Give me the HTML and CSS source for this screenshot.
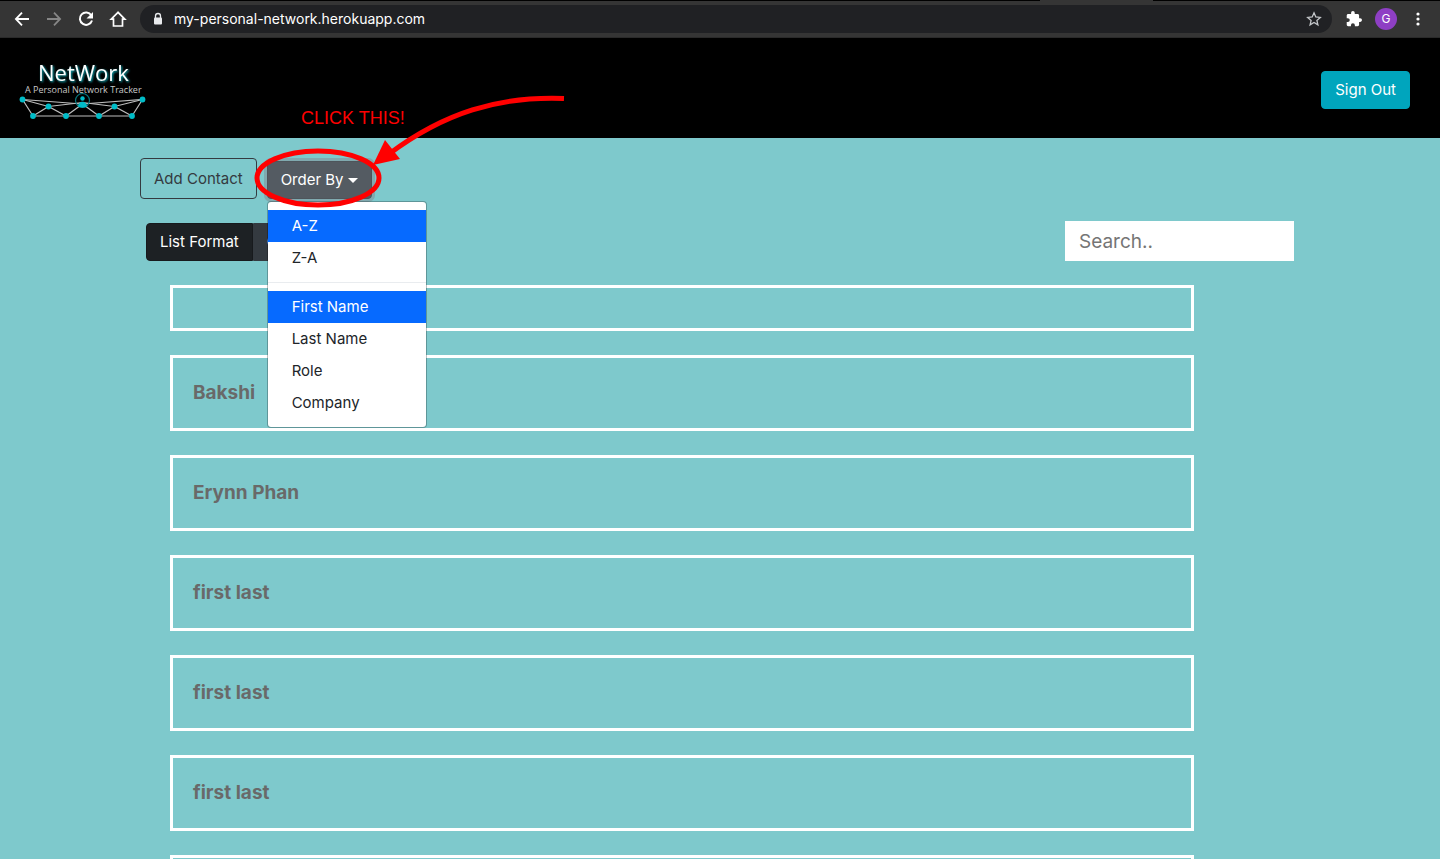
FILE: index.html
```html
<!DOCTYPE html>
<html lang="en">
<head>
<meta charset="utf-8">
<title>NetWork</title>
<link rel="stylesheet" href="styles.css">
</head>
<body>
<div class="browser">
  <div class="tab-strip"><span class="tab-edge"></span></div>
  <div class="toolbar">
    <button class="tool" type="button" aria-label="Back"><svg width="24" height="24" viewBox="0 0 24 24"><path d="M19 12H6.500M12 5.700 5.900 12l6.100 6.300" fill="none" stroke="#fff" stroke-width="1.800"/></svg></button>
    <button class="tool" type="button" aria-label="Forward"><svg width="24" height="24" viewBox="0 0 24 24"><path d="M5 12h12.500M12 5.700 18.100 12 12 18.300" fill="none" stroke="#868686" stroke-width="1.800"/></svg></button>
    <button class="tool" type="button" aria-label="Reload"><svg width="24" height="24" viewBox="0 0 24 24"><path d="M17.300 8.300A6.200 6.200 0 1 0 18 13.500" fill="none" stroke="#fff" stroke-width="2"/><path d="M19 5v6.500h-6.500z" fill="#fff"/></svg></button>
    <button class="tool" type="button" aria-label="Home"><svg width="24" height="24" viewBox="0 0 24 24"><path d="M12 5.300 5.200 12.200h2.300v6.800h9v-6.800h2.300z" fill="none" stroke="#fff" stroke-width="1.700"/></svg></button>
    <div class="address">
      <svg width="12" height="14" viewBox="0 0 12 14"><path d="M3.500 6V4a2.500 2.500 0 0 1 5 0v2" fill="none" stroke="#e8eaed" stroke-width="1.300"/><rect x="2" y="5.500" width="8" height="7" rx="1" fill="#e8eaed"/></svg>
      <input class="url" type="text" aria-label="Address" value="my-personal-network.herokuapp.com">
      <svg width="16" height="16" viewBox="0 0 16 16"><path d="M8 1.800 9.800 6l4.500.4-3.400 3 1 4.400L8 11.500l-3.900 2.300 1-4.400-3.400-3L6.200 6z" fill="none" stroke="#c4c7ca" stroke-width="1.300"/></svg>
    </div>
    <button class="tool" type="button" aria-label="Extensions"><svg width="16" height="16" viewBox="1 1 22 22"><path d="M20.500 11H19V7c0-1.100-.9-2-2-2h-4V3.500a2.500 2.500 0 0 0-5 0V5H4c-1.100 0-2 .9-2 2v3.800h1.500a2.700 2.700 0 0 1 0 5.400H2V20c0 1.100.9 2 2 2h3.800v-1.500a2.700 2.700 0 0 1 5.400 0V22H17c1.100 0 2-.9 2-2v-4h1.500a2.500 2.500 0 0 0 0-5z" fill="#fff"/></svg></button>
    <button class="avatar" type="button">G</button>
    <button class="tool" type="button" aria-label="Menu"><svg width="16" height="16" viewBox="0 0 16 16" fill="#fff"><circle cx="8" cy="3" r="1.600"/><circle cx="8" cy="8" r="1.600"/><circle cx="8" cy="13" r="1.600"/></svg></button>
  </div>
</div>

<header class="header">
  <a class="logo" href="#" aria-label="NetWork home">
    <svg width="130" height="60" viewBox="0 0 130 60">
      <text class="logo-name" x="18" y="19">NetWork</text>
      <text class="logo-tag" x="5" y="31">A Personal Network Tracker</text>
      <g fill="none" stroke="#bdbdbd" stroke-width="1.200">
        <path d="M2.500 37.500 62.500 42l60-4.500L112 54H13z"/>
        <path d="M2.500 37.500 28.500 44.500 62.500 40.500 94.500 44.500l28-7"/>
        <path d="M13 54l15.500-9.500L46 54l16.500-12L79 54l15.500-9.500L112 54"/>
      </g>
      <circle cx="62.500" cy="38.500" r="7" fill="none" stroke="#08777e" stroke-width="1.200"/>
      <g fill="#00bcc8">
        <circle cx="62.500" cy="36.500" r="2.200"/>
        <path d="M58 44.500c0-6.500 9-6.500 9 0-2 1.500-7 1.500-9 0z"/>
        <circle cx="2.500" cy="37.500" r="2.900"/><circle cx="28.500" cy="44.500" r="2.900"/>
        <circle cx="94.500" cy="44.500" r="2.900"/><circle cx="122.500" cy="37.500" r="2.900"/>
        <circle cx="13" cy="54" r="2.900"/><circle cx="46" cy="54" r="2.900"/>
        <circle cx="79" cy="54" r="2.900"/><circle cx="112" cy="54" r="2.900"/>
      </g>
    </svg>
  </a>
  <button class="btn btn-info" type="button">Sign Out</button>
</header>

<main class="main">
  <div class="actions">
    <button class="btn btn-outline" type="button">Add Contact</button>
    <div class="dropdown">
      <button class="btn btn-order" type="button" aria-expanded="true">Order By<span class="caret"></span></button>
      <div class="menu">
        <button class="item active" type="button">A-Z</button>
        <button class="item" type="button">Z-A</button>
        <hr class="divider">
        <button class="item active" type="button">First Name</button>
        <button class="item" type="button">Last Name</button>
        <button class="item" type="button">Role</button>
        <button class="item" type="button">Company</button>
      </div>
      <svg class="callout" width="320" height="115" viewBox="0 0 320 115">
        <text x="50" y="29">CLICK THIS!</text>
        <ellipse cx="67" cy="83" rx="61" ry="27" fill="none" stroke="#f00" stroke-width="5"/>
        <path d="M313 3.500C247 1 193 18 138 59" fill="none" stroke="#f00" stroke-width="5"/>
        <path d="M122 70 134 45 149 64z" fill="#f00"/>
      </svg>
    </div>
  </div>

  <div class="filters">
    <div class="group">
      <button class="btn btn-dark pressed" type="button">List Format</button>
      <button class="btn btn-dark" type="button">Card Format</button>
    </div>
    <input class="search" type="text" placeholder="Search.." aria-label="Search">
  </div>

  <div class="contacts">
    <article class="contact"></article>
    <article class="contact"><h2>Bakshi</h2></article>
    <article class="contact"><h2>Erynn Phan</h2></article>
    <article class="contact"><h2>first last</h2></article>
    <article class="contact"><h2>first last</h2></article>
    <article class="contact"><h2>first last</h2></article>
    <article class="contact"></article>
  </div>
</main>
</body>
</html>
```

FILE: styles.css
```css
* { box-sizing: border-box; }
html { scrollbar-width: none; background: #7ec9cc; }
body {
  margin: 0;
  font-family: Inter, "Liberation Sans", sans-serif;
  font-size: 15px;
  line-height: 24px;
  color: #212529;
}
button, input { font: inherit; margin: 0; }
button { cursor: pointer; }

.browser { background: #353535; border-bottom: 1px solid #2a2a2a; }
.tab-strip { display: flex; justify-content: flex-end; height: 1px; padding-right: 287px; background: #000; }
.tab-edge { width: 113px; background: #353535; }
.toolbar { display: flex; align-items: center; gap: 8px; height: 36px; padding: 0 10px; }
.tool { display: flex; align-items: center; justify-content: center; width: 24px; height: 24px; padding: 0; border: 0; background: none; flex: none; }
.address { display: flex; align-items: center; flex: 1; height: 28px; margin: 0 2px; padding: 0 10px 0 12px; border-radius: 14px; background: #202124; }
.url { flex: 1; min-width: 0; padding: 0 0 0 10px; border: 0; outline: 0; background: none; color: #fff; font-size: 14px; }
.avatar { width: 22px; height: 22px; margin: 0 1px; padding: 0; border: 0; border-radius: 50%; background: #8e3fc4; color: #fff; font-size: 12px; line-height: 22px; }

.header { display: flex; align-items: center; justify-content: space-between; height: 100px; padding: 4px 30px 0 20px; background: #000; }
.logo { display: flex; padding-top: 4px; }
.logo svg { overflow: visible; }
.logo-name { font-family: "Open Sans", sans-serif; font-size: 22px; fill: #fff; filter: drop-shadow(1px 1px 1px #0fb3c0); }
.logo-tag { font-family: "Open Sans", sans-serif; font-size: 9px; fill: #c8c8c8; }

.btn { padding: 6px 13px; border: 1px solid transparent; border-radius: 4px; }
.btn-info { background: #00a5bd; border-color: #00a5bd; color: #fff; }
.btn-outline { padding-top: 8px; padding-bottom: 7px; background: none; border-color: #343a40; color: #343a40; }
.btn-order { display: flex; align-items: center; gap: 4px; background: #545b62; border-color: #4e555b; color: #fff; box-shadow: 0 0 0 3px rgba(130, 138, 145, .5); }
.caret { border: 5px solid transparent; border-top-color: #fff; border-bottom: 0; }
.btn-dark { background: #343a40; border-color: #343a40; color: #fff; }
.pressed { background: #1d2124; border-color: #171a1d; }

.main { padding: 20px 140px 0; }
.actions { display: flex; align-items: flex-end; gap: 10px; }
.dropdown { position: relative; }
.menu { position: absolute; z-index: 2; top: 100%; left: 0; width: 160px; margin-top: 2px; padding: 8px 0; border: 1px solid rgba(0, 0, 0, .25); border-radius: 4px; background: #fff; background-clip: padding-box; }
.item { display: block; width: 100%; padding: 4px 24px; border: 0; background: none; color: #212529; text-align: left; }
.item.active { background: #066aff; color: #fff; }
.divider { height: 1px; margin: 8px 0; border: 0; background: #e9ecef; }
.callout { position: absolute; z-index: 3; top: -66px; left: -16px; pointer-events: none; }
.callout text { font-family: "Liberation Sans", sans-serif; font-size: 18px; fill: #f00; }

.filters { display: flex; align-items: center; justify-content: space-between; margin-top: 22px; padding: 0 6px; }
.group { display: flex; padding-top: 2px; }
.group .btn:first-child { border-radius: 4px 0 0 4px; }
.group .btn:last-child { border-radius: 0 4px 4px 0; }
.search { width: 229px; height: 40px; padding: 0 14px; border: 0; border-radius: 0; background: #fff; font-size: 19px; }
.search::placeholder { color: #757575; }

.contacts { display: flex; flex-direction: column; gap: 24px; margin: 24px 106px 0 30px; }
.contact { padding: 20px; border: 3px solid #fff; }
.contact h2 { margin: 0; font-size: 19px; line-height: 30px; font-weight: 700; color: #696969; }
```
